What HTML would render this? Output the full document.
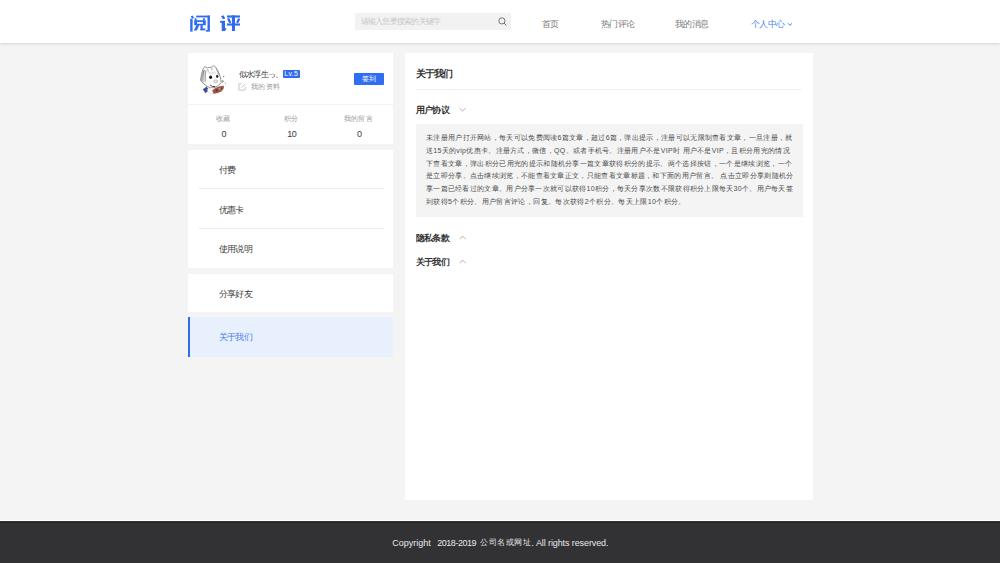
<!DOCTYPE html>
<html><head><meta charset="utf-8">
<style>
*{margin:0;padding:0;box-sizing:border-box}
html,body{width:1000px;height:563px;overflow:hidden}
body{background:#f4f4f4;font-family:"Liberation Sans",sans-serif;position:relative;color:#333}
.abs{position:absolute;white-space:nowrap}
#hdr{left:0;top:0;width:1000px;height:43px;background:#fff;box-shadow:0 1px 3px rgba(0,0,0,0.12)}
.logo{left:189.5px;top:13px;font-size:17px;font-weight:bold;color:#2f6bef;letter-spacing:7px;line-height:22px;transform:scaleX(1.22);transform-origin:0 0;-webkit-text-stroke:0.5px #2f6bef}
.search{left:355px;top:13px;width:156px;height:17px;background:#f2f2f2}
.ph{left:5.8px;top:3.1px;line-height:12px;font-size:8px;letter-spacing:-0.78px;color:#c8c8c8}
.nav{top:18.3px;font-size:9px;letter-spacing:-0.6px;line-height:12px;color:#7a7a7a}
.card{background:#fff}
.lbl{font-size:7px;line-height:10px;color:#999;letter-spacing:0.2px}
.num{font-size:9px;line-height:10px;color:#3a3a3a}
.menu{left:219px;font-size:9px;letter-spacing:-0.8px;color:#3c3c3c;line-height:12px}
.sep{height:1px;background:#efefef}
.h1{font-size:10px;letter-spacing:-0.9px;font-weight:bold;color:#333;line-height:12px}
.h2{font-size:9px;letter-spacing:-0.8px;font-weight:bold;color:#333;line-height:12px}
.txt{left:426px;font-size:7px;line-height:12px;color:#4c4c4c}
#ftr{left:0;top:521px;width:1000px;height:42px;background:#323234}
</style></head><body>
<div id="hdr" class="abs"></div>
<svg class="abs" style="left:187px;top:12.4px" width="26" height="23" viewBox="0 0 26 23" fill="#2d6bf0">
<polygon points="3.7,4.3 5.5,3.6 7.1,5.8 5.3,6.7"/>
<rect x="3.2" y="6.7" width="2.4" height="12.9"/>
<rect x="9.2" y="3.6" width="13.7" height="1.8"/>
<rect x="20.5" y="3.6" width="2.4" height="16"/>
<rect x="18.8" y="18.1" width="2.2" height="1.5"/>
<polygon points="7.4,6.5 9.1,6.1 9.9,8.5 8.2,8.8"/>
<polygon points="16.2,6.1 18.2,6.4 17.4,8.7 15.8,8.4"/>
<path fill-rule="evenodd" d="M7.2 8.3 H18.8 V13.3 H7.2 Z M10.1 9.9 V11.8 H15.9 V9.9 Z"/>
<polygon points="9.5,13.1 12.4,13.1 9.8,18.4 6.8,18.4"/>
<rect x="13.5" y="13.1" width="2.2" height="5.2"/>
<rect x="13.5" y="16.5" width="4.9" height="1.8"/>
</svg>
<svg class="abs" style="left:217px;top:12.4px" width="26" height="23" viewBox="0 0 26 23" fill="#2d6bf0">
<polygon points="4.1,4.1 6.7,3.6 8.1,6.5 5.9,7.1"/>
<rect x="3.2" y="8.9" width="4.7" height="1.7"/>
<rect x="4.8" y="8.9" width="3.1" height="10"/>
<polygon points="7.8,16 9.5,16.8 7.8,18.9"/>
<rect x="10" y="3.6" width="13" height="1.8"/>
<polygon points="10.3,6.8 12.3,6.2 14.2,10.6 12.2,11.1"/>
<polygon points="21.1,6.5 23.1,7.1 21.1,11.1 19.3,10.6"/>
<rect x="10" y="11.6" width="13" height="1.8"/>
<rect x="14.9" y="3.6" width="3.1" height="15.4"/>
</svg>
<svg class="abs" style="left:217px;top:12px" width="26" height="23" viewBox="0 0 26 23" fill="#2d6bf0">
<polygon points="4.3,4.2 6.6,3.8 7.9,6.4 6.0,6.9"/>
<rect x="3.3" y="9.0" width="4.5" height="1.5"/>
<rect x="4.9" y="9.2" width="2.9" height="9.6"/>
<polygon points="7.8,16.2 9.3,16.9 7.8,18.8"/>
<rect x="10" y="3.7" width="12.9" height="1.6"/>
<polygon points="10.4,6.8 12.2,6.3 14.0,10.5 12.3,11.0"/>
<polygon points="21.1,6.6 23.0,7.1 21.0,11.0 19.4,10.6"/>
<rect x="10" y="11.7" width="12.9" height="1.6"/>
<rect x="15.0" y="3.9" width="2.9" height="15.1"/>
</svg>
<div class="abs search"><div class="abs ph">请输入您要搜索的关键字</div>
<svg class="abs" style="left:143px;top:4px" width="9" height="9" viewBox="0 0 9 9"><circle cx="3.9" cy="3.9" r="3.1" fill="none" stroke="#666" stroke-width="0.9"/><line x1="6.1" y1="6.1" x2="8.4" y2="8.4" stroke="#666" stroke-width="1"/></svg>
</div>
<div class="abs nav" style="left:542px">首页</div>
<div class="abs nav" style="left:601px">热门评论</div>
<div class="abs nav" style="left:675px">我的消息</div>
<div class="abs nav" style="left:751px;color:#4a82ee">个人中心</div>
<svg class="abs" style="left:787px;top:21.5px" width="6" height="5" viewBox="0 0 6 5"><polyline points="0.9,1.3 3,3.3 5.1,1.3" fill="none" stroke="#4a82ee" stroke-width="1"/></svg>

<!-- profile card -->
<div class="abs card" style="left:188px;top:53px;width:205.4px;height:91px"></div>
<div class="abs sep" style="left:188px;top:104px;width:205.4px;background:#f2f2f2"></div>
<svg class="abs" style="left:197px;top:62px" width="32" height="34" viewBox="0 0 32 34">
  <path d="M6 7 L7.8 4.4 L10 6 L15.5 4.8 L16.8 3.6 L18.9 5.4 L21.2 9.8 L23.4 15 L24.2 20.5 L22 23 L18 25.5 L13 25.8 L9 23.5 L5.2 20.5 L3.6 18 L4.5 12 Z" fill="#fff" stroke="#5e5e5e" stroke-width="0.65"/>
  <path d="M5.8 7.4 L4.4 12 L3.4 18.4 L5.4 19.6 L6.2 13 L7.6 8.4 Z" fill="#a8a8a8"/><path d="M7.6 8.4 L6.8 13 L6.6 20 L8.4 21 L8.6 13.5 L9.6 8.6 Z" fill="#dcdcdc"/>
  <path d="M7.2 8 L6.4 14 L6 20.6 M8.8 8.4 L8.4 14 L8.8 19.5 M10.5 7.2 L11.6 10.2 M15 6 L14.6 8.6" fill="none" stroke="#6e6e6e" stroke-width="0.55"/>
  <path d="M18.8 6 L20.8 10.2 L21.4 13 M21 8.6 L22.8 14.2" fill="none" stroke="#8a8a8a" stroke-width="0.55"/>
  <path d="M10 9.5 L13.6 10.2 L17.5 9.2 L19.4 11.5 L16 11.8 L12 12 Z" fill="#e6e6e6"/>
  <ellipse cx="13.6" cy="15.2" rx="1.5" ry="1.8" fill="#151515"/>
  <ellipse cx="20.2" cy="14.3" rx="1.1" ry="1.6" fill="#202020"/>
  <path d="M16.8 18.4 Q18.8 17.4 20.6 18.6 L20.2 20.4 Q18.4 21 17 20.2 Z" fill="#eeeeee" stroke="#8f8f8f" stroke-width="0.5"/>
  <path d="M13.2 23 Q15.5 25.2 18.2 24.6" fill="none" stroke="#222" stroke-width="0.9"/>
  <path d="M5.8 27.2 L9.8 24.6 L12.2 28.8 L8.2 31 Z" fill="#3f4d8f"/>
  <path d="M10.4 27.4 L15.5 25.6 L17.8 30.5 L13.6 32 L10.8 30.4 Z" fill="#fff" stroke="#bbb" stroke-width="0.4"/>
  <path d="M15.2 28.6 Q19 24.6 26.6 23.8 Q28 26 24.4 29.6 Q20 32 16.4 31.6 Z" fill="#9a5a48"/>
  <circle cx="19.6" cy="28.4" r="1.1" fill="#6d2c22"/><circle cx="22.6" cy="26.8" r="0.9" fill="#d49a8a"/><circle cx="24.6" cy="26.4" r="0.6" fill="#6d2c22"/>
  <circle cx="26.6" cy="14.5" r="0.8" fill="#8c8c8c"/><circle cx="25.7" cy="19.3" r="1.1" fill="#a58a66"/><circle cx="28.4" cy="21.1" r="0.6" fill="#999"/>
</svg>
<div class="abs" style="left:238.8px;top:69px;font-size:8px;line-height:12px;color:#333;letter-spacing:-0.75px">似水浮生っ、</div>
<div class="abs" style="left:282.5px;top:69.8px;width:17.5px;height:8.3px;background:#2f6bef;border-radius:1px;color:#fff;font-size:7px;line-height:8.3px;text-align:center;letter-spacing:0.3px">Lv.5</div>
<svg class="abs" style="left:238px;top:82.5px" width="8" height="8" viewBox="0 0 8 8"><path d="M3.8 0.9 H0.9 V7.1 H7.2 V4" fill="none" stroke="#bdbdbd" stroke-width="0.85"/><path d="M3.6 4.5 L7.5 0.6" stroke="#bdbdbd" stroke-width="0.85"/></svg>
<div class="abs lbl" style="left:251px;top:81.5px;letter-spacing:0.35px">我的资料</div>
<div class="abs" style="left:354px;top:72.7px;width:30px;height:12.3px;background:#2f6ef0;border-radius:1px;color:#fff;font-size:7px;line-height:12.3px;text-align:center;letter-spacing:0.5px">签到</div>
<div class="abs lbl" style="left:216px;top:113.5px">收藏</div>
<div class="abs lbl" style="left:283.5px;top:113.5px">积分</div>
<div class="abs lbl" style="left:344px;top:113.5px">我的留言</div>
<div class="abs num" style="left:221.5px;top:129px">0</div>
<div class="abs num" style="left:287.3px;top:129px;letter-spacing:-0.6px">10</div>
<div class="abs num" style="left:357px;top:129px">0</div>

<!-- menu card 1 -->
<div class="abs card" style="left:188px;top:150px;width:205.4px;height:118px"></div>
<div class="abs menu" style="top:163.7px">付费</div>
<div class="abs sep" style="left:198px;top:188px;width:186px"></div>
<div class="abs menu" style="top:203.8px">优惠卡</div>
<div class="abs sep" style="left:198px;top:228px;width:186px"></div>
<div class="abs menu" style="top:242.7px">使用说明</div>

<div class="abs card" style="left:188px;top:273.5px;width:205.4px;height:38.5px"></div>
<div class="abs menu" style="top:288px">分享好友</div>
<div class="abs" style="left:188px;top:317.3px;width:205.4px;height:39.7px;background:#e8f0fe;border-left:2px solid #2f6bef"></div>
<div class="abs menu" style="top:331.4px;color:#4a7fea">关于我们</div>

<!-- right card -->
<div class="abs card" style="left:405px;top:53px;width:408px;height:447px"></div>
<div class="abs h1" style="left:416px;top:68px">关于我们</div>
<div class="abs sep" style="left:416px;top:88.5px;width:386px"></div>
<div class="abs h2" style="left:416px;top:103.5px">用户协议</div>
<svg class="abs" style="left:458px;top:106px" width="9" height="7" viewBox="0 0 9 7"><polyline points="1.6,2.3 4.6,5 7.6,2.3" fill="none" stroke="#9c9c9c" stroke-width="0.8"/></svg>
<div class="abs" style="left:415.5px;top:124.4px;width:387px;height:92.5px;background:#f4f4f4"></div>
<div class="abs txt" style="top:132.10px;letter-spacing:0.31px">未注册用户打开网站，每天可以免费阅读6篇文章，超过6篇，弹出提示，注册可以无限制查看文章，一旦注册，就</div>
<div class="abs txt" style="top:144.85px;letter-spacing:0.317px">送15天的vip优惠卡。注册方式，微信，QQ。或者手机号。注册用户不是VIP时 用户不是VIP，且积分用完的情况</div>
<div class="abs txt" style="top:157.60px;letter-spacing:0.324px">下查看文章，弹出积分已用完的提示和随机分享一篇文章获得积分的提示。两个选择按钮，一个是继续浏览，一个</div>
<div class="abs txt" style="top:170.35px;letter-spacing:0.305px">是立即分享。点击继续浏览，不能查看文章正文，只能查看文章标题，和下面的用户留言。 点击立即分享则随机分</div>
<div class="abs txt" style="top:183.10px;letter-spacing:0.298px">享一篇已经看过的文章。用户分享一次就可以获得10积分，每天分享次数不限获得积分上限每天30个。用户每天签</div>
<div class="abs txt" style="top:195.85px;letter-spacing:0.353px">到获得5个积分。用户留言评论，回复。每次获得2个积分。每天上限10个积分。</div>
<div class="abs h2" style="left:416px;top:231.5px">隐私条款</div>
<svg class="abs" style="left:458px;top:234px" width="9" height="7" viewBox="0 0 9 7"><polyline points="1.6,5 4.6,2.3 7.6,5" fill="none" stroke="#9c9c9c" stroke-width="0.8"/></svg>
<div class="abs h2" style="left:416px;top:255.5px">关于我们</div>
<svg class="abs" style="left:458px;top:258px" width="9" height="7" viewBox="0 0 9 7"><polyline points="1.6,5 4.6,2.3 7.6,5" fill="none" stroke="#9c9c9c" stroke-width="0.8"/></svg>

<div class="abs" style="left:0;top:520px;width:1000px;height:1px;background:#fff"></div>
<div id="ftr" class="abs"></div>
<div class="abs" style="left:0;top:522px;width:1000px;height:1px;background:#262628"></div>
<div class="abs" style="left:392.3px;top:537px;font-size:9px;line-height:12px;color:#e8e8e8">Copyright</div>
<div class="abs" style="left:437.2px;top:537px;font-size:9px;line-height:12px;color:#e8e8e8;letter-spacing:-0.45px">2018-2019</div>
<div class="abs" style="left:480.3px;top:537px;font-size:8px;line-height:12px;color:#e8e8e8;letter-spacing:0.45px">公司名或网址</div>
<div class="abs" style="left:531.6px;top:537px;font-size:9px;line-height:12px;color:#e8e8e8;letter-spacing:-0.1px">. All rights reserved.</div>
</body></html>
